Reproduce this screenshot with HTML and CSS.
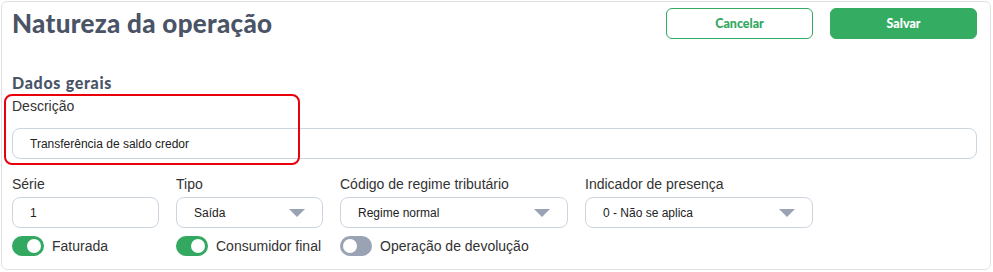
FILE: index.html
```html
<!DOCTYPE html>
<html lang="pt-BR">
<head>
    <meta charset="UTF-8">
    <title>Natureza da operação</title>
    <link rel="stylesheet" href="styles.css">
</head>
<body>
    <div class="card">
        <div class="header">
            <h1>Natureza da operação</h1>
            <div class="actions">
                <button class="btn btn-outline">Cancelar</button>
                <button class="btn btn-primary">Salvar</button>
            </div>
        </div>

        <h2>Dados gerais</h2>

        <div class="field">
            <label>Descrição</label>
            <div class="input">Transferência de saldo credor</div>
        </div>
        <div class="highlight"></div>

        <div class="row">
            <div class="col col-sm">
                <label>Série</label>
                <div class="input">1</div>
                <div class="toggle-line">
                    <span class="toggle on"></span>
                    <span>Faturada</span>
                </div>
            </div>
            <div class="col col-sm">
                <label>Tipo</label>
                <div class="input select">Saída <span class="caret"></span></div>
                <div class="toggle-line">
                    <span class="toggle on"></span>
                    <span>Consumidor final</span>
                </div>
            </div>
            <div class="col col-lg">
                <label>Código de regime tributário</label>
                <div class="input select">Regime normal <span class="caret"></span></div>
                <div class="toggle-line">
                    <span class="toggle"></span>
                    <span>Operação de devolução</span>
                </div>
            </div>
            <div class="col col-lg">
                <label>Indicador de presença</label>
                <div class="input select">0 - Não se aplica <span class="caret"></span></div>
            </div>
        </div>
    </div>
</body>
</html>
```

FILE: styles.css
```css
body {
    margin: 0;
    font-family: 'Liberation Sans', Arial, sans-serif;
    color: #333;
    background: #fff;
}
.card {
    position: relative;
    margin: 1px 2px 1px 1px;
    height: 269px;
    border: 1px solid #e2e2e2;
    border-radius: 6px;
    padding: 6px 13px 0 10px;
    box-sizing: border-box;
}
.header {
    display: flex;
    justify-content: space-between;
    align-items: center;
}
h1 {
    margin: 0;
    font-family: Lato, sans-serif;
    font-weight: 900;
    font-size: 26px;
    line-height: 31px;
    letter-spacing: 0.3px;
    color: #4a5466;
}
.actions {
    display: flex;
    gap: 17px;
}
.btn {
    width: 147px;
    height: 31px;
    border-radius: 6px;
    font-family: Lato, sans-serif;
    font-weight: 900;
    font-size: 12.5px;
    cursor: pointer;
}
.btn-outline {
    background: #fff;
    border: 1px solid #32a860;
    color: #32a860;
}
.btn-primary {
    background: #34ad62;
    border: 1px solid #34ad62;
    color: #fff;
}
h2 {
    margin: 34px 0 0;
    font-family: Lato, sans-serif;
    font-weight: 900;
    font-size: 16px;
    line-height: 20px;
    letter-spacing: 0.7px;
    color: #4a5466;
}
label {
    display: block;
    font-size: 14px;
    line-height: 18px;
}
.field label {
    margin-top: 4px;
}
.field .input {
    margin-top: 13px;
}
.input {
    display: flex;
    align-items: center;
    height: 31px;
    margin-top: 4px;
    padding: 0 17px;
    border: 1px solid #ccd4e0;
    border-radius: 8px;
    box-sizing: border-box;
    font-size: 12px;
    color: #222;
}
.select {
    justify-content: space-between;
}
.caret {
    width: 0;
    height: 0;
    border-left: 8px solid transparent;
    border-right: 8px solid transparent;
    border-top: 8px solid #9aa3b4;
}
.highlight {
    position: absolute;
    left: 2px;
    top: 92px;
    width: 296px;
    height: 71px;
    border: 2px solid #e8000b;
    border-radius: 8px;
    box-sizing: border-box;
}
.row {
    display: flex;
    gap: 17px;
    margin-top: 16px;
}
.col-sm {
    width: 147px;
}
.col-lg {
    width: 228px;
}
.toggle-line {
    display: flex;
    align-items: center;
    gap: 8px;
    margin-top: 8px;
    font-size: 14px;
}
.toggle {
    position: relative;
    width: 32px;
    height: 20px;
    border-radius: 10px;
    background: #9aa3b4;
}
.toggle::after {
    content: "";
    position: absolute;
    top: 3px;
    left: 3px;
    width: 14px;
    height: 14px;
    border-radius: 50%;
    background: #fff;
}
.toggle.on {
    background: #32a860;
}
.toggle.on::after {
    left: 15px;
}
```
